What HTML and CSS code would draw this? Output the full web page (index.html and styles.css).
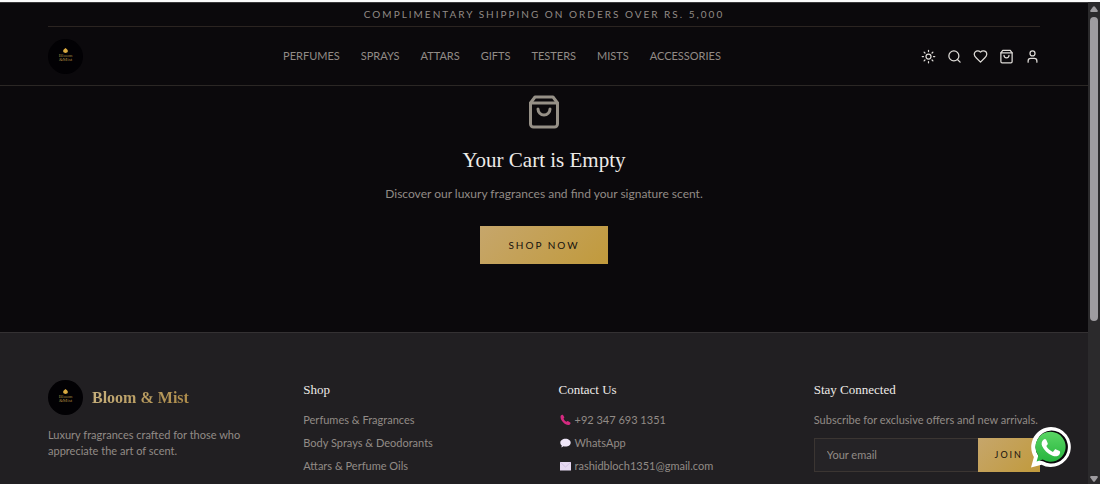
FILE: index.html
```html
<!DOCTYPE html>
<html lang="en">
<head>
<meta charset="utf-8">
<meta name="viewport" content="width=device-width, initial-scale=1">
<title>Your Cart | Bloom &amp; Mist</title>
<link rel="stylesheet" href="styles.css">
</head>
<body>
<svg class="defs" aria-hidden="true">
  <defs>
    <symbol id="bag" viewBox="0 0 24 24"><path d="M6 2 3 6v14a2 2 0 0 0 2 2h14a2 2 0 0 0 2-2V6l-3-4Z"/><path d="M3 6h18"/><path d="M16 10a4 4 0 0 1-8 0"/></symbol>
    <symbol id="logo" viewBox="0 0 35 35">
      <circle cx="17.5" cy="17.5" r="17.5" fill="#020104"/>
      <path d="M17.5 9c1 .8 2.800 2 2.300 3.600-.3 1-1.300 1.300-2.300 1.300s-2-.3-2.300-1.300C14.700 11 16.500 9.800 17.500 9Z" fill="#d9a940"/>
      <text x="17.500" y="18" class="logo-text">Bloom</text>
      <text x="17.500" y="22" class="logo-text">&amp;Mist</text>
    </symbol>
  </defs>
</svg>
<div class="page">
  <header class="header">
    <div class="container">
      <p class="banner">Complimentary shipping on orders over Rs. 5,000</p>
      <div class="bar">
        <a href="#" class="logo-link" aria-label="Home"><svg class="logo"><use href="#logo"/></svg></a>
        <nav class="nav">
          <a href="#">Perfumes</a>
          <a href="#">Sprays</a>
          <a href="#">Attars</a>
          <a href="#">Gifts</a>
          <a href="#">Testers</a>
          <a href="#">Mists</a>
          <a href="#">Accessories</a>
        </nav>
        <div class="actions">
          <button type="button" aria-label="Toggle theme"><svg class="icon" viewBox="0 0 24 24"><circle cx="12" cy="12" r="4"/><path d="M12 2v2M12 20v2M4.930 4.930l1.410 1.410M17.660 17.660l1.410 1.410M2 12h2M20 12h2M6.340 17.660l-1.410 1.410M19.070 4.930l-1.410 1.410"/></svg></button>
          <button type="button" aria-label="Search"><svg class="icon" viewBox="0 0 24 24"><circle cx="11" cy="11" r="8"/><path d="m21 21-4.300-4.300"/></svg></button>
          <a href="#" aria-label="Wishlist"><svg class="icon" viewBox="0 0 24 24"><path d="M19 14c1.490-1.460 3-3.210 3-5.500A5.500 5.500 0 0 0 16.500 3c-1.760 0-3 .5-4.500 2-1.500-1.500-2.740-2-4.500-2A5.500 5.500 0 0 0 2 8.500c0 2.300 1.500 4.050 3 5.500l7 7Z"/></svg></a>
          <a href="#" aria-label="Cart"><svg class="icon"><use href="#bag"/></svg></a>
          <a href="#" aria-label="Account"><svg class="icon" viewBox="0 0 24 24"><path d="M19 21v-2a4 4 0 0 0-4-4H9a4 4 0 0 0-4 4v2"/><circle cx="12" cy="7" r="4"/></svg></a>
        </div>
      </div>
    </div>
  </header>

  <main class="empty">
    <svg class="empty-icon" aria-hidden="true"><use href="#bag"/></svg>
    <h1>Your Cart is Empty</h1>
    <p>Discover our luxury fragrances and find your signature scent.</p>
    <a href="#" class="shop-now">Shop Now</a>
  </main>

  <footer class="footer">
    <div class="container columns">
      <section>
        <div class="brand">
          <svg class="logo" aria-hidden="true"><use href="#logo"/></svg>
          <span class="brand-name">Bloom &amp; Mist</span>
        </div>
        <p class="about">Luxury fragrances crafted for those who appreciate the art of scent.</p>
      </section>
      <section>
        <h2>Shop</h2>
        <ul class="links">
          <li><a href="#">Perfumes &amp; Fragrances</a></li>
          <li><a href="#">Body Sprays &amp; Deodorants</a></li>
          <li><a href="#">Attars &amp; Perfume Oils</a></li>
        </ul>
      </section>
      <section>
        <h2>Contact Us</h2>
        <ul class="links">
          <li><a href="#"><svg class="mark" viewBox="0 0 12 12"><path d="M1.200 1.800C1.900.8 3 .5 3.500 1.100l1.200 2c.3.6-.1 1-.7 1.500.5 1.500 1.600 2.600 3.100 3.200.6-.6 1-.9 1.600-.6l2 1.300c.7.5.3 1.500-.7 2.200C6.500 12.300-.2 6 1.200 1.800Z" fill="#d42a80"/></svg>+92 347 693 1351</a></li>
          <li><a href="#"><svg class="mark" viewBox="0 0 12 12"><path d="M6 1.800c3 0 5.200 1.700 5.200 3.900S9 9.600 6 9.600c-.7 0-1.400-.1-2-.3L1.900 10.500l.4-2.100C1.300 7.700.8 6.800.8 5.700.8 3.500 3 1.800 6 1.800Z" fill="#efe6f8"/></svg>WhatsApp</a></li>
          <li><a href="#"><svg class="mark" viewBox="0 0 12 12"><rect x=".5" y="2" width="11" height="8.500" fill="#e6d9f2"/><path d="m.5 2 5.500 5 5.500-5" fill="none" stroke="#c9b6dc" stroke-width=".7"/></svg>rashidbloch1351@gmail.com</a></li>
        </ul>
      </section>
      <section>
        <h2>Stay Connected</h2>
        <form class="signup">
          <label for="email">Subscribe for exclusive offers and new arrivals.</label>
          <div class="field">
            <input id="email" type="email" placeholder="Your email">
            <button type="button">Join</button>
          </div>
        </form>
      </section>
    </div>
  </footer>
</div>

<div class="scrollbar" aria-hidden="true">
  <svg class="arrow" viewBox="0 0 8 6"><path d="M3 .8Q4-.3 5 .8L7.700 4.500Q8.200 6 6.800 6H1.200Q-.2 6 .3 4.500Z"/></svg>
  <div class="track"><div class="thumb"></div></div>
  <svg class="arrow" viewBox="0 0 8 6"><path d="M3 5.200Q4 6.300 5 5.200L7.700 1.500Q8.200 0 6.800 0H1.200Q-.2 0 .3 1.500Z"/></svg>
</div>

<a href="#" class="whatsapp" aria-label="Chat on WhatsApp">
  <svg viewBox="0 0 42 42">
    <defs><linearGradient id="green" x1="0" y1="0" x2="0" y2="1"><stop offset="0" stop-color="#5ad664"/><stop offset="1" stop-color="#27b43e"/></linearGradient></defs>
    <path d="M21 1A20 20 0 1 1 11.500 38.700L1 41.500 3.900 31A20 20 0 0 1 21 1Z" fill="#fff"/>
    <path d="M21.500 4.500A16.500 16.500 0 1 1 13 35.200L9.500 34.500 8.600 30.300A16.500 16.500 0 0 1 21.500 4.500Z" fill="#09090b"/>
    <path d="M20.500 5.800A15 15 0 1 1 12.800 33.600L6.600 35.500 8.300 29.500A15 15 0 0 1 20.500 5.800Z" fill="url(#green)"/>
    <path d="M13.700 13.500c.8-.8 2-.7 2.500.3l1.500 3.500c.3.8-.1 1.300-1.400 2.800 1.500 2.900 3.700 4.700 6.600 5.800l1.800-2.200c.4-.5.9-.5 1.400-.3l3.500 1.700c.9.500.6 2.600-.5 3.800-1.500 1.500-3.900 1.700-6.500.8-5-1.800-8.500-5.200-10.500-9.600-1.100-2.600-.2-5.200 1.600-6.600Z" fill="#fff"/>
  </svg>
</a>
</body>
</html>
```
FILE: styles.css
```css
* { box-sizing: border-box; }

body {
  margin: 0;
  min-height: 100vh;
  display: flex;
  border-top: 2px solid #fbfbfb;
  background: #0b090c;
  color: #928b86;
  font-family: Lato, sans-serif;
  font-size: 11px;
  line-height: 16px;
}

h1, h2, p, ul { margin: 0; padding: 0; }
h1, h2, .brand-name { font-family: "Liberation Serif", serif; }
a { color: inherit; text-decoration: none; }
button { padding: 0; border: 0; background: none; color: inherit; font: inherit; }
ul { list-style: none; }

.defs { position: absolute; width: 0; height: 0; }
.page {
  flex: 1;
  min-width: 0;
  display: flex;
  flex-direction: column;
  border-top: 1px solid #3a393b;
}
.container { padding: 0 48px; }

.header { border-bottom: 1px solid #2b2725; }
.banner {
  padding: 3px 0 4px;
  border-bottom: 1px solid #2b2421;
  font-size: 10px;
  letter-spacing: 2px;
  text-align: center;
  text-transform: uppercase;
}
.bar {
  display: flex;
  align-items: center;
  justify-content: space-between;
  height: 58px;
}
.logo-link { display: flex; }
.logo { width: 35px; height: 35px; }
.logo-text {
  fill: #a5823f;
  font-family: "Liberation Serif", serif;
  font-size: 5px;
  text-anchor: middle;
}
.nav { display: flex; gap: 21px; text-transform: uppercase; }
.actions {
  display: flex;
  gap: 11px;
  color: #dedbd7;
}
.actions > * { display: flex; }
.icon { width: 15px; height: 15px; }
.icon, .empty-icon {
  fill: none;
  stroke: currentColor;
  stroke-width: 2;
  stroke-linecap: round;
  stroke-linejoin: round;
}

.empty {
  display: flex;
  flex-direction: column;
  align-items: center;
  padding: 8px 48px 68px;
}
.empty-icon { width: 36px; height: 36px; color: #969087; }
.empty h1 {
  margin-top: 14px;
  color: #eeebe8;
  font-size: 21px;
  font-weight: 400;
  line-height: 32px;
}
.empty p { margin-top: 10px; font-size: 12px; }
.shop-now {
  margin-top: 24px;
  padding: 11px 28px;
  background: linear-gradient(135deg, #c6a66b, #c19a3c);
  color: #15110e;
  font-size: 10px;
  letter-spacing: 2px;
  text-transform: uppercase;
}

.footer {
  flex: 1;
  padding: 47px 0 8px;
  border-top: 1px solid #343133;
  background: #211f22;
}
.columns {
  display: grid;
  grid-template-columns: repeat(4, minmax(0, 1fr));
  gap: 29px;
}
.brand { display: flex; align-items: center; gap: 9px; }
.brand-name {
  background: linear-gradient(135deg, #c9b380, #ab8845);
  background-clip: text;
  color: transparent;
  font-size: 16px;
  font-weight: 700;
  line-height: 24px;
}
.about { margin-top: 12px; }
.footer h2 {
  color: #eeebe8;
  font-size: 13px;
  font-weight: 400;
  line-height: 20px;
}
.links {
  display: flex;
  flex-direction: column;
  gap: 7px;
  margin-top: 12px;
}
.links a { display: flex; align-items: center; gap: 3px; }
.mark { width: 13px; height: 12px; }
.signup { display: flex; flex-direction: column; gap: 10px; margin-top: 12px; }
.field { display: flex; height: 34px; }
.field input {
  flex: 1;
  min-width: 0;
  padding: 0 12px;
  border: 1px solid #3b3532;
  border-right: 0;
  border-radius: 0;
  background: #252326;
  color: #eeebe8;
  font: inherit;
}
.field input::placeholder { color: #928b86; opacity: 1; }
.field button {
  padding: 0 17px;
  background: linear-gradient(135deg, #c6a66b, #c19a3c);
  color: #15110e;
  font-size: 9px;
  letter-spacing: 2px;
  text-transform: uppercase;
}

.scrollbar {
  display: flex;
  flex-direction: column;
  align-items: center;
  gap: 5px;
  width: 12px;
  padding: 4px 0 2px;
  background: #2b2a2c;
}
.arrow { width: 8px; height: 6px; fill: #9e9ca0; }
.track { flex: 1; width: 8px; }
.thumb { height: 67%; border-radius: 4px; background: #9e9ca0; }

.whatsapp {
  position: fixed;
  right: 28px;
  bottom: 16px;
  width: 42px;
  height: 42px;
}
.whatsapp svg { display: block; }
```
